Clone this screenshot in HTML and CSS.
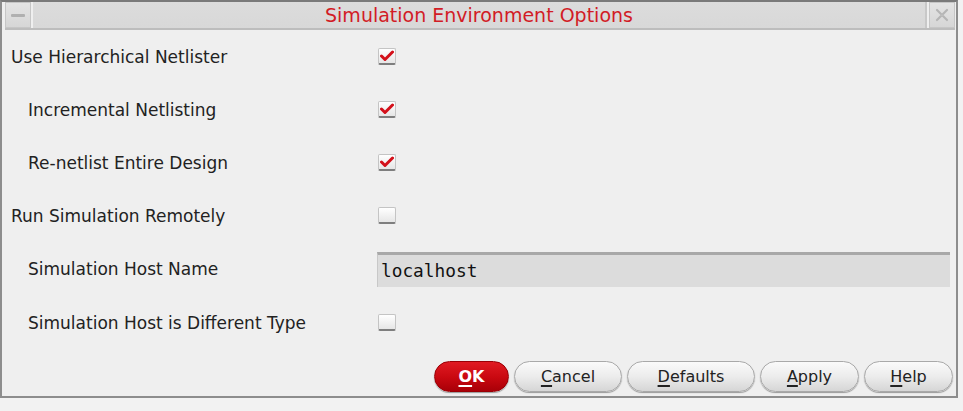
FILE: index.html
```html
<!DOCTYPE html>
<html>
<head>
<meta charset="utf-8">
<link rel="stylesheet" href="styles.css">
</head>
<body>
<div class="window">
  <div class="titlebar">
    <div class="tb-btn min"><span class="dash"></span></div>
    <div class="title">Simulation Environment Options</div>
    <div class="tb-btn close">
      <svg width="16" height="16" viewBox="0 0 16 16"><path d="M3 3 L7 7 M13 3 L9 7 M3 13 L7 9 M13 13 L9 9" stroke="#b5b5b5" stroke-width="2.2" fill="none" stroke-linecap="round"/></svg>
    </div>
  </div>
  <div class="form">
    <div class="row"><div class="label">Use Hierarchical Netlister</div><div class="ctl"><span class="cb on"><svg width="14" height="12" viewBox="0 0 14 12"><path d="M1.5 6 L5 9.5 L12.5 2" stroke="#d3101a" stroke-width="3" fill="none" stroke-linecap="round" stroke-linejoin="round"/></svg></span></div></div>
    <div class="row"><div class="label sub">Incremental Netlisting</div><div class="ctl"><span class="cb on"><svg width="14" height="12" viewBox="0 0 14 12"><path d="M1.5 6 L5 9.5 L12.5 2" stroke="#d3101a" stroke-width="3" fill="none" stroke-linecap="round" stroke-linejoin="round"/></svg></span></div></div>
    <div class="row"><div class="label sub">Re-netlist Entire Design</div><div class="ctl"><span class="cb on"><svg width="14" height="12" viewBox="0 0 14 12"><path d="M1.5 6 L5 9.5 L12.5 2" stroke="#d3101a" stroke-width="3" fill="none" stroke-linecap="round" stroke-linejoin="round"/></svg></span></div></div>
    <div class="row"><div class="label">Run Simulation Remotely</div><div class="ctl"><span class="cb"></span></div></div>
    <div class="row tall"><div class="label sub">Simulation Host Name</div><div class="ctl"><div class="field">localhost</div></div></div>
    <div class="row"><div class="label sub">Simulation Host is Different Type</div><div class="ctl"><span class="cb"></span></div></div>
  </div>
  <div class="buttons">
    <button class="btn ok"><u>O</u>K</button>
    <button class="btn cancel"><u>C</u>ancel</button>
    <button class="btn defaults"><u>D</u>efaults</button>
    <button class="btn apply"><u>A</u>pply</button>
    <button class="btn help"><u>H</u>elp</button>
  </div>
</div>
</body>
</html>
```

FILE: styles.css
```css
html, body {
  margin: 0;
  padding: 0;
  background: #f2f2f2;
}
body {
  width: 963px;
  height: 411px;
  font-family: "DejaVu Sans", sans-serif;
  color: #222;
}
.window {
  width: 958px;
  height: 398px;
  box-sizing: border-box;
  border: 2px solid #8d8d8d;
  border-top-color: #7a7a7a;
  background: #efefef;
  display: flex;
  flex-direction: column;
}
.titlebar {
  display: flex;
  height: 26px;
  margin: 0 1px 0 3px;
  gap: 2px;
  border-bottom: 2px solid #bdbdbd;
}
.tb-btn {
  width: 26px;
  box-sizing: border-box;
  background: linear-gradient(#e4e4e4, #d6d6d6);
  border: 1px solid #c6c6c6;
  display: flex;
  align-items: center;
  justify-content: center;
}
.tb-btn .dash {
  width: 14px;
  height: 3px;
  background: #b0b0b0;
  border-radius: 1px;
}
.title {
  flex: 1;
  background: linear-gradient(#dcdcdc, #d8d8d8);
  color: #d21c26;
  font-size: 19px;
  text-align: center;
  line-height: 27px;
  border-right: 2px solid #c8c8c8;
}
.form {
  display: flex;
  flex-direction: column;
  padding-left: 9px;
}
.row {
  display: flex;
  align-items: center;
  height: 53px;
}
.row.tall {
  height: 54px;
}
.label {
  width: 366px;
  font-size: 17px;
  color: #222;
}
.label.sub {
  padding-left: 17px;
  box-sizing: border-box;
}
.ctl {
  flex: 1;
  display: flex;
  align-items: center;
}
.cb {
  width: 18px;
  height: 17px;
  box-sizing: border-box;
  border: 1px solid #c4c4c4;
  border-bottom: 2px solid #7e7e7e;
  border-radius: 2px;
  background: linear-gradient(#ffffff, #e6e6e6);
  display: flex;
  align-items: center;
  justify-content: center;
  margin-left: 1px;
}
.field {
  width: 573px;
  height: 35px;
  box-sizing: border-box;
  background: #dcdcdc;
  border-top: 3px solid #a8a8a8;
  border-left: 1px solid #c8c8c8;
  font-family: "DejaVu Sans Mono", monospace;
  font-size: 17.8px;
  color: #111;
  padding-left: 3px;
  line-height: 31px;
}
.buttons {
  margin-top: auto;
  display: flex;
  justify-content: flex-end;
  gap: 5px;
  padding: 0 3px 4px 0;
}
.btn {
  height: 31px;
  border-radius: 16px;
  border: 1px solid #a9a9a9;
  background: linear-gradient(#fafafa 0%, #ececec 50%, #d6d6d6 100%);
  font-family: "DejaVu Sans", sans-serif;
  font-size: 16px;
  color: #222;
  padding: 0;
  box-shadow: 0 1px 1px #9a9a9a;
}
.btn u {
  text-underline-offset: 3px;
  text-decoration-thickness: 2px;
}
.btn.ok {
  width: 75px;
  background: linear-gradient(#e01a22 0%, #c80810 55%, #a80008 100%);
  border-color: #9a0006;
  color: #fff;
  font-weight: bold;
}
.btn.cancel { width: 108px; }
.btn.defaults { width: 128px; }
.btn.apply { width: 99px; }
.btn.help { width: 89px; }
```
